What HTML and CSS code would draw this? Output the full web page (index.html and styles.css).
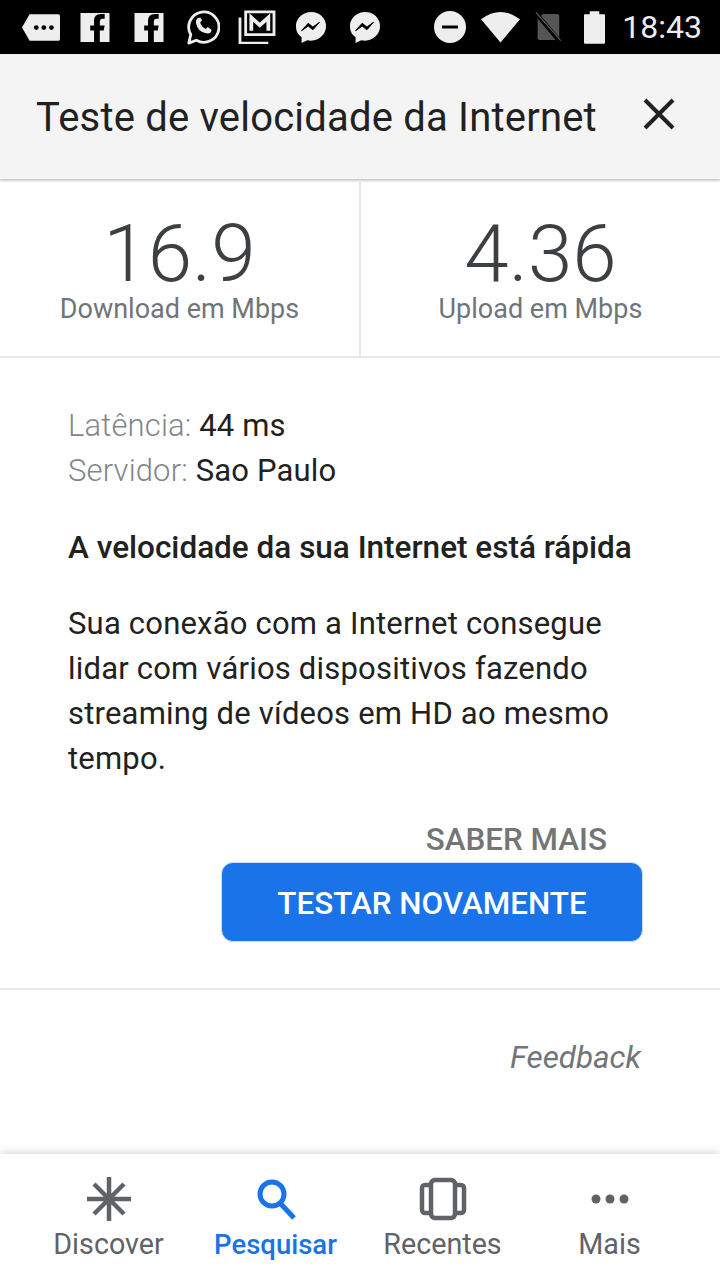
FILE: index.html
```html
<!DOCTYPE html>
<html lang="pt">
<head>
    <meta charset="UTF-8">
    <meta name="viewport" content="width=device-width, initial-scale=1.0">
    <title>Teste de velocidade da Internet</title>
    <link rel="stylesheet" href="styles.css">
</head>
<body>

    <div class="status-bar">
        <div class="status-icons">
            <svg class="ic ic-more" viewBox="0 0 40 30"><path d="M8 1h30a2 2 0 0 1 2 2v24a2 2 0 0 1-2 2H8L0 15z" fill="#eee"/><circle cx="15" cy="15" r="2.500" fill="#000"/><circle cx="23" cy="15" r="2.500" fill="#000"/><circle cx="31" cy="15" r="2.500" fill="#000"/></svg>
            <svg class="ic ic-fb" viewBox="0 0 30 30"><path d="M0 0h30v30H20V18h4l1-5h-5V9q0-3 3-3h2V1h-4q-7 0-7 7v5h-4v5h4v12H0z" fill="#eee"/></svg>
            <svg class="ic ic-fb ic-fb2" viewBox="0 0 30 30"><path d="M0 0h30v30H20V18h4l1-5h-5V9q0-3 3-3h2V1h-4q-7 0-7 7v5h-4v5h4v12H0z" fill="#eee"/></svg>
            <svg class="ic ic-wa" viewBox="0 0 36 38"><path d="M3 36l2-9A16 16 0 1 1 11 33z" fill="none" stroke="#eee" stroke-width="3" stroke-linejoin="round"/><path d="M12 10q-3 3 0 9t11 7q4 0 4-4l-4-3-2 2q-5-2-6-7l2-2-2-3z" fill="#eee"/></svg>
            <svg class="ic ic-mail" viewBox="0 0 40 36"><path d="M8 2h30v24H8z" fill="none" stroke="#eee" stroke-width="3"/><path d="M14 22V8l9 8 9-8v14" fill="none" stroke="#eee" stroke-width="4"/><path d="M2 8v27h30" fill="none" stroke="#eee" stroke-width="3"/></svg>
            <svg class="ic ic-msg" viewBox="0 0 34 34"><path d="M17 1C8 1 1 8 1 16q0 8 6 12v6l6-3q2 .5 4 .5c9 0 16-7 16-15.500S26 1 17 1z" fill="#eee"/><path d="M7 21l7-8 5 4 7-5-7 8-5-4z" fill="#000" stroke="#000"/></svg>
            <svg class="ic ic-msg ic-msg2" viewBox="0 0 34 34"><path d="M17 1C8 1 1 8 1 16q0 8 6 12v6l6-3q2 .5 4 .5c9 0 16-7 16-15.500S26 1 17 1z" fill="#eee"/><path d="M7 21l7-8 5 4 7-5-7 8-5-4z" fill="#000" stroke="#000"/></svg>
        </div>
        <div class="status-right">
            <svg class="ic ic-dnd" viewBox="0 0 32 32"><circle cx="16" cy="16" r="16" fill="#eee"/><rect x="8" y="14.500" width="16" height="3" fill="#000"/></svg>
            <svg class="ic ic-wifi" viewBox="0 0 40 32"><path d="M0 8Q20-7 40 8L20 32z" fill="#eee"/></svg>
            <svg class="ic ic-sim" viewBox="0 0 30 34"><path d="M9 2h17a2 2 0 0 1 2 2v26a2 2 0 0 1-2 2H5a2 2 0 0 1-2-2V8z" fill="#555"/><path d="M1 1l27 32" stroke="#000" stroke-width="5"/><path d="M1 0l29 33" stroke="#555" stroke-width="1.500"/></svg>
            <svg class="ic ic-batt" viewBox="0 0 22 34"><path d="M6 0h10v3h5a1 1 0 0 1 1 1v29a1 1 0 0 1-1 1H1a1 1 0 0 1-1-1V4a1 1 0 0 1 1-1h5z" fill="#eee"/></svg>
            <span class="clock">18:43</span>
        </div>
    </div>

    <div class="header">
        <h1>Teste de velocidade da Internet</h1>
        <svg class="close" viewBox="0 0 32 32"><path d="M2 2l28 28M30 2L2 30" stroke="#212121" stroke-width="4" fill="none"/></svg>
    </div>

    <div class="stats">
        <div class="stat">
            <div class="stat-value">16.9</div>
            <div class="stat-label">Download em Mbps</div>
        </div>
        <div class="stat stat-last">
            <div class="stat-value">4.36</div>
            <div class="stat-label">Upload em Mbps</div>
        </div>
    </div>

    <div class="result">
        <p class="meta"><span>Latência:</span> 44 ms</p>
        <p class="meta"><span>Servidor:</span> Sao Paulo</p>
        <h2>A velocidade da sua Internet está rápida</h2>
        <p class="desc">Sua conexão com a Internet consegue lidar com vários dispositivos fazendo streaming de vídeos em HD ao mesmo tempo.</p>
        <div class="actions">
            <a class="learn">SABER MAIS</a>
            <button class="retest">TESTAR NOVAMENTE</button>
        </div>
    </div>

    <div class="feedback">Feedback</div>

    <div class="nav">
        <div class="nav-item">
            <svg class="nav-ic" viewBox="0 0 48 48"><path d="M24 2v44M2 24h44M9 9l30 30M39 9L9 39" stroke="#5f6368" stroke-width="4.500" fill="none"/></svg>
            <span>Discover</span>
        </div>
        <div class="nav-item active">
            <svg class="nav-ic" viewBox="0 0 48 48"><circle cx="20" cy="19" r="12" stroke="#1a73e8" stroke-width="5" fill="none"/><path d="M28 28l14 15" stroke="#1a73e8" stroke-width="5" fill="none"/></svg>
            <span>Pesquisar</span>
        </div>
        <div class="nav-item">
            <svg class="nav-ic" viewBox="0 0 48 48"><rect x="12" y="5" width="24" height="38" rx="4" stroke="#5f6368" stroke-width="4.500" fill="none"/><path d="M12 10H6a3 3 0 0 0-3 3v22a3 3 0 0 0 3 3h6M36 10h6a3 3 0 0 1 3 3v22a3 3 0 0 1-3 3h-6" stroke="#5f6368" stroke-width="4.500" fill="none"/></svg>
            <span>Recentes</span>
        </div>
        <div class="nav-item">
            <svg class="nav-ic" viewBox="0 0 48 48"><circle cx="10" cy="24" r="4.500" fill="#5f6368"/><circle cx="24" cy="24" r="4.500" fill="#5f6368"/><circle cx="38" cy="24" r="4.500" fill="#5f6368"/></svg>
            <span>Mais</span>
        </div>
    </div>

</body>
</html>
```

FILE: styles.css
```css
html, body {
    margin: 0;
    padding: 0;
}

body {
    width: 720px;
    height: 1280px;
    overflow: hidden;
    position: relative;
    background: white;
    font-family: Roboto, sans-serif;
    color: #212121;
}

.status-bar {
    height: 54px;
    background: black;
    display: flex;
    align-items: center;
    justify-content: space-between;
    padding: 0 18px 0 22px;
}

.status-icons, .status-right {
    display: flex;
    align-items: center;
}

.ic {
    height: 29px;
    display: block;
}

.ic-more { width: 38px; }
.ic-fb { width: 30px; margin-left: 20px; }
.ic-fb2 { margin-left: 24px; }
.ic-wa { width: 34px; height: 38px; margin-left: 22px; }
.ic-mail { width: 38px; height: 34px; margin-left: 18px; }
.ic-msg { width: 32px; height: 32px; margin-left: 19px; }
.ic-msg2 { margin-left: 22px; }

.ic-dnd { width: 32px; height: 32px; }
.ic-wifi { width: 39px; height: 32px; margin-left: 15px; }
.ic-sim { width: 26px; height: 30px; margin-left: 15px; }
.ic-batt { width: 21px; height: 33px; margin-left: 23px; }

.clock {
    color: #eee;
    font-size: 32px;
    margin-left: 17px;
}

.header {
    height: 126px;
    box-sizing: border-box;
    background: #f4f4f4;
    border-bottom: 1px solid #cfcfcf;
    box-shadow: 0 1px 2px rgba(0, 0, 0, 0.2);
    display: flex;
    align-items: center;
    justify-content: space-between;
    padding: 0 45px 0 36px;
}

h1 {
    margin: 2px 0 0;
    font-size: 40px;
    font-weight: 400;
    letter-spacing: 0.2px;
}

.close {
    width: 32px;
    height: 32px;
    margin-bottom: 5px;
}

.stats {
    display: flex;
    height: 178px;
    box-sizing: border-box;
    border-bottom: 2px solid #e8e8e8;
}

.stat {
    flex: 1;
    text-align: center;
    border-right: 2px solid #e8e8e8;
    padding-top: 35px;
}

.stat-last {
    border-right: none;
}

.stat-value {
    font-size: 80px;
    font-weight: 300;
    line-height: 79px;
    color: #3c4043;
}

.stat-label {
    font-size: 27px;
    line-height: 30px;
    color: #70757a;
}

.result {
    padding: 45px 77px 0 68px;
    border-bottom: 2px solid #e8e8e8;
    height: 632px;
    box-sizing: border-box;
}

.meta {
    margin: 0;
    font-size: 31px;
    line-height: 45px;
    letter-spacing: 0.15px;
}

.meta span {
    color: #80868b;
    font-weight: 300;
}

h2 {
    margin: 32px 0 0;
    font-size: 31.500px;
    font-weight: 500;
    line-height: 45px;
}

.desc {
    margin: 31px 0 0;
    font-size: 31px;
    line-height: 45px;
    letter-spacing: 0.2px;
}

.actions {
    display: flex;
    flex-direction: column;
    align-items: flex-end;
    margin-top: 41px;
}

.learn {
    font-size: 31.400px;
    font-weight: 500;
    line-height: 36px;
    color: #757575;
    margin-right: 36px;
}

.retest {
    width: 422px;
    height: 80px;
    margin-top: 4px;
    padding-top: 3px;
    border-radius: 12px;
    border: 1px solid #cfe0f8;
    background: #1a73e8;
    color: white;
    font-family: Roboto, sans-serif;
    font-size: 31.400px;
    font-weight: 500;
}

.feedback {
    text-align: right;
    font-size: 31.400px;
    font-style: italic;
    color: #70757a;
    padding: 50px 79px 0 0;
    line-height: 36px;
}

.nav {
    position: absolute;
    left: 0;
    right: 0;
    bottom: 0;
    height: 126px;
    background: white;
    box-shadow: 0 -2px 8px rgba(0, 0, 0, 0.15);
    display: flex;
    padding: 0 27px 0 25px;
    box-sizing: border-box;
}

.nav-item {
    flex: 1;
    display: flex;
    flex-direction: column;
    align-items: center;
    font-size: 28.700px;
    color: #5f6368;
    padding-top: 21px;
}

.nav-ic {
    width: 48px;
    height: 48px;
    margin-bottom: 4px;
}

.nav-item.active {
    color: #1a73e8;
    font-size: 27.500px;
    font-weight: 500;
}

.active .nav-ic {
    margin-bottom: 5px;
}
```
